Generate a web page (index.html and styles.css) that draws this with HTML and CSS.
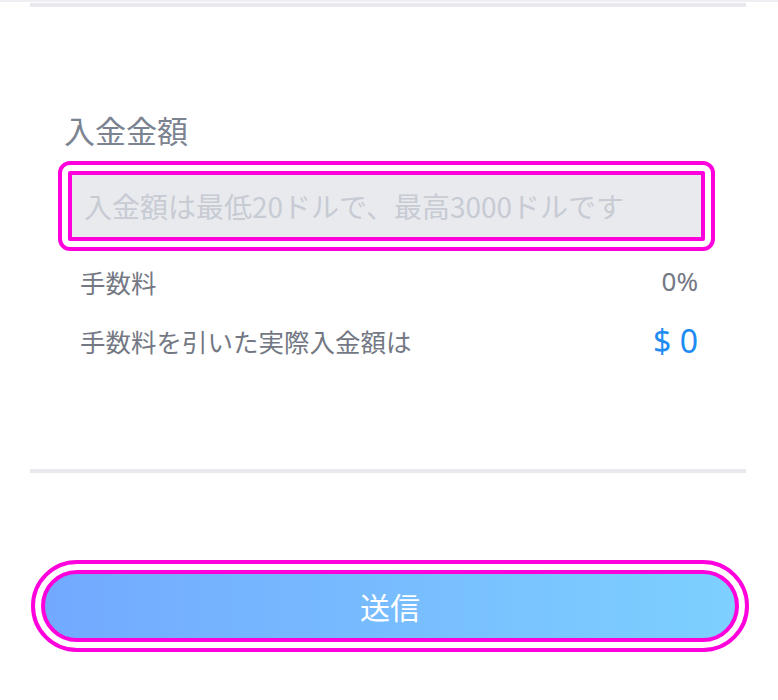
FILE: index.html
```html
<!DOCTYPE html>
<html lang="ja">
<head>
    <meta charset="UTF-8">
    <meta name="viewport" content="width=device-width, initial-scale=1.0">
    <title>入金</title>
    <link rel="stylesheet" href="styles.css">
</head>
<body>

<div class="page-top"></div>
<div class="rule rule-top"></div>

<form id="depositForm">
    <label class="field-label" for="amount">入金金額</label>
    <div class="input-ring">
        <input type="text" id="amount" class="amount-input" placeholder="入金額は最低20ドルで、最高3000ドルです">
    </div>

    <div class="info-row">
        <span>手数料</span>
        <span class="info-value">0%</span>
    </div>
    <div class="info-row info-row-total">
        <span>手数料を引いた実際入金額は</span>
        <span class="total-value">$ 0</span>
    </div>
</form>

<div class="rule rule-bottom"></div>

<div class="submit-ring">
    <button type="button" class="submitButton">送信</button>
</div>

</body>
</html>
```

FILE: styles.css
```css
body {
    margin: 0;
    background: #fff;
    font-family: "Noto Sans CJK JP", "Noto Sans", sans-serif;
}
.page-top {
    height: 2px;
    background-color: #eceef2;
}
.rule {
    height: 4px;
    width: 716px;
    margin-left: 30px;
    background-color: #e8e8ee;
}
.rule-top {
    margin-top: 1px;
}
form {
    margin: 0;
    padding-top: 103px;
}
.field-label {
    display: block;
    margin-left: 64px;
    font-size: 31px;
    line-height: 40px;
    color: #7b8391;
}
.input-ring {
    box-sizing: border-box;
    width: 657px;
    height: 90px;
    margin: 11px 0 0 58px;
    padding: 6px;
    border: 4px solid #ff00dd;
    border-radius: 12px;
}
.amount-input {
    box-sizing: border-box;
    width: 100%;
    height: 70px;
    margin: 0;
    padding: 0 12px;
    border: 4px solid #ff00dd;
    border-radius: 2px;
    background-color: #e9eaee;
    font-family: "Noto Sans CJK JP", sans-serif;
    font-size: 28px;
    color: #555;
    outline: none;
}
.amount-input::placeholder {
    color: #c7cbd3;
}
.info-row {
    display: flex;
    justify-content: space-between;
    align-items: center;
    width: 618px;
    margin: 12px 0 0 80px;
    height: 36px;
    font-size: 25.5px;
    color: #737884;
}
.info-row-total {
    margin-top: 23px;
}
.info-value {
    font-family: "Noto Sans", sans-serif;
    font-size: 26px;
}
.total-value {
    font-family: "Noto Sans", sans-serif;
    font-size: 32px;
    color: #1e8cf2;
}
.rule-bottom {
    margin-top: 111px;
}
.submit-ring {
    box-sizing: border-box;
    width: 718px;
    height: 92px;
    margin: 87px 0 0 31px;
    padding: 6px;
    border: 4px solid #ff00dd;
    border-radius: 46px;
}
.submitButton {
    display: block;
    box-sizing: border-box;
    width: 100%;
    height: 72px;
    border: 4px solid #ff00dd;
    border-radius: 36px;
    background: linear-gradient(to right, #72a9ff, #7dd0ff);
    color: #fff;
    font-family: "Noto Sans CJK JP", sans-serif;
    font-size: 30px;
    padding: 0 0 0 0;
    cursor: pointer;
}
```
